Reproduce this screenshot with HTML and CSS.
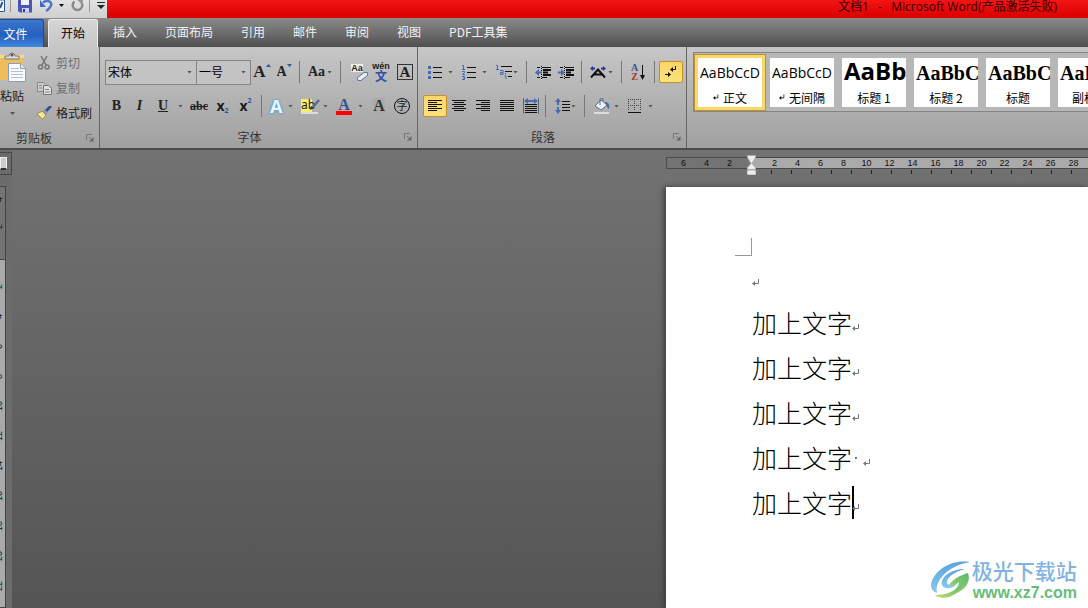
FILE: index.html
```html
<!DOCTYPE html>
<html lang="zh-CN">
<head>
<meta charset="utf-8">
<title>文档1 - Microsoft Word</title>
<link rel="stylesheet" href="styles.css">
</head>
<body>
<svg class="defs" aria-hidden="true">
  <symbol id="ret" viewBox="0 0 8 8"><path d="M6.500 0v4.500H2" fill="none" stroke="currentColor"/><path d="M0 4.500 3 2v5z" fill="currentColor"/></symbol>
  <symbol id="launch" viewBox="0 0 8 8"><path d="M.5 6V.5H6M3 3l3 3" fill="none" stroke="#777"/><path d="M7.500 3v4.500H3z" fill="#666"/></symbol>
</svg>
<header class="titlebar">
  <div class="quick">
    <button aria-label="Word"><svg width="5" height="12" viewBox="0 0 5 12"><path d="M0 0h4.500v11.500H0" fill="#fff" stroke="#2455a4"/><path d="M0 8 2.500 2" stroke="#2455a4" stroke-width="2"/></svg></button>
    <i class="q-sep"></i>
    <button aria-label="保存"><svg width="14" height="13" viewBox="0 0 14 13"><path d="M0 0h14v12.500H2L0 11z" fill="#4a55b8"/><path d="M3 0h8v5H3z" fill="#eef2fc"/><path d="M4 8h7v4.500H4z" fill="#cdd3ee"/><path d="M5 9h2v3H5z" fill="#333c8c"/></svg></button>
    <button aria-label="撤消"><svg width="13" height="12" viewBox="0 0 13 12"><path d="M3 2.500C8-1 13 2 10.500 6.500 9.500 8.500 8 10 6 11" fill="none" stroke="#4a78cc" stroke-width="2.500"/><path d="M0 0v7h6z" fill="#3c6bc4"/></svg></button>
    <i class="caret dark"></i>
    <button aria-label="重复"><svg width="13" height="12" viewBox="0 0 13 12"><path d="M3.500 1.500a4.800 4.800 0 1 0 6 0" fill="none" stroke="#8b8b8b" stroke-width="2.500"/><path d="M6 0h6v5z" fill="#999"/></svg></button>
    <i class="q-sep"></i>
    <button aria-label="自定义快速访问工具栏"><svg width="8" height="8" viewBox="0 0 8 8"><path d="M0 .5h8" stroke="#222"/><path d="M0 3h8L4 7z" fill="#222"/></svg></button>
  </div>
  <div class="title">文档1&nbsp; &nbsp;-&nbsp; &nbsp;Microsoft Word(产品激活失败)</div>
</header>
<nav class="tabs">
  <button class="file">文件</button>
  <button class="tab active">开始</button>
  <button class="tab">插入</button>
  <button class="tab">页面布局</button>
  <button class="tab">引用</button>
  <button class="tab">邮件</button>
  <button class="tab">审阅</button>
  <button class="tab">视图</button>
  <button class="tab">PDF工具集</button>
</nav>
<section class="ribbon">
  <div class="group clip">
    <div class="clip-body">
      <button class="paste">
        <svg width="27" height="32" viewBox="0 0 27 32"><path d="M0 3h24v25H0z" fill="#eebd5b"/><path d="M0 3h24v3H0z" fill="#f6d791"/><path d="M5 6V4h4a3 3 0 0 1 6 0h4v3H5z" fill="#ddd" stroke="#777"/><circle cx="12" cy="3" r="1.500" fill="#555"/><path d="M8.500 11.500h12l5 5v13h-17z" fill="#f8fafe" stroke="#8b9cb8"/><path d="M20.500 11.500v5h5" fill="#dfe7f5" stroke="#8b9cb8"/><path d="M11 16.500h8M11 19.500h12M11 22.500h12M11 25.500h12" stroke="#b4c0d6"/></svg>
        <span>粘贴</span><i class="caret"></i>
      </button>
      <div class="clip-list">
        <button class="off"><svg width="15" height="14" viewBox="0 0 15 14"><path d="M4 0l5 9M10 0 5 9" stroke="#777" stroke-width="1.500"/><circle cx="3.500" cy="11" r="2" fill="none" stroke="#777" stroke-width="1.500"/><circle cx="10" cy="11" r="2" fill="none" stroke="#777" stroke-width="1.500"/></svg>剪切</button>
        <button class="off"><svg width="15" height="14" viewBox="0 0 15 14"><path d="M.5 1.500h6l2 2v7h-8z" fill="#ccc" stroke="#888"/><path d="M6.500 4.500h5l3 3v6h-8z" fill="#ddd" stroke="#777"/><path d="M2 4.500h3M2 7h3M8 8.500h4M8 11h5" stroke="#888"/></svg>复制</button>
        <button><svg width="15" height="14" viewBox="0 0 15 14"><path d="M14 0 9 5" stroke="#3c4d91" stroke-width="3"/><path d="m7 3 4 4-2 2-4-4z" fill="#8b97bd"/><path d="M5 5l4 4-3 4.500L0 8z" fill="#f2e08b" stroke="#a88d32"/><path d="m2 7 4 4" stroke="#fff"/></svg>格式刷</button>
      </div>
    </div>
    <div class="label"><span>剪贴板</span><button aria-label="剪贴板选项"><svg width="8" height="8"><use href="#launch"/></svg></button></div>
  </div>

  <div class="group font">
    <div class="row">
      <div class="combo name"><select aria-label="字体"><option>宋体</option></select></div>
      <div class="combo size"><select aria-label="字号"><option>一号</option></select></div>
      <button class="w22 serif big" aria-label="增大字体">A<svg class="tip" width="5" height="3"><path d="M0 3h5L2.500 0z" fill="#2f55a5"/></svg></button>
      <button class="w22 serif mid" aria-label="缩小字体">A<svg class="tip" width="5" height="3"><path d="M0 0h5L2.500 3z" fill="#2f55a5"/></svg></button>
      <i class="sep"></i>
      <button class="w32 serif case" aria-label="更改大小写">Aa<i class="caret"></i></button>
      <i class="sep"></i>
      <button class="w24 clear" aria-label="清除格式"><span>Aa</span><svg width="12" height="9" viewBox="0 0 12 9"><path d="M1 6 8 .500h3.500v3L5 8.500H2z" fill="#e8eef8" stroke="#60749c"/></svg></button>
      <button class="w24 wen" aria-label="拼音指南"><span>wén</span><b>文</b></button>
      <button class="w24" aria-label="字符边框"><span class="boxed">A</span></button>
    </div>
    <div class="row">
      <button class="w23 serif mid" aria-label="加粗">B</button>
      <button class="w23 serif mid ital" aria-label="倾斜">I</button>
      <button class="split w36 under serif mid" aria-label="下划线"><u>U</u><i class="caret"></i></button>
      <button class="w24 serif strike" aria-label="删除线">abc</button>
      <button class="w23 script" aria-label="下标">x<sub>2</sub></button>
      <button class="w23 script" aria-label="上标">x<sup>2</sup></button>
      <i class="sep"></i>
      <button class="split w31" aria-label="文本效果"><span class="glow">A</span><i class="caret"></i></button>
      <button class="split w35" aria-label="突出显示"><span class="hi">ab<svg width="12" height="12" viewBox="0 0 12 12"><path d="M11 1 5 8" stroke="#5c6d94" stroke-width="2.500"/><path d="m3 7 3 2-4 2z" fill="#333"/></svg></span><i class="caret"></i></button>
      <button class="split w35" aria-label="字体颜色"><span class="fc">A</span><i class="caret"></i></button>
      <button class="w24" aria-label="字符底纹"><span class="shade">A</span></button>
      <button class="w22" aria-label="带圈字符"><span class="ring">字</span></button>
    </div>
    <div class="label"><span>字体</span><button aria-label="字体选项"><svg width="8" height="8"><use href="#launch"/></svg></button></div>
  </div>

  <div class="group para">
    <div class="row">
      <button class="split w34" aria-label="项目符号"><svg width="14" height="14" viewBox="0 0 14 14"><path d="M5 2.500h9M5 7.500h9M5 12.500h9" stroke="#111"/><path d="M0 1h3v3H0zM0 6h3v3H0zM0 11h3v3H0z" fill="#4669b0"/></svg><i class="caret"></i></button>
      <button class="split w34" aria-label="编号"><svg width="14" height="15" viewBox="0 0 14 15"><path d="M5 2.500h9M5 7.500h9M5 12.500h9" stroke="#111"/><path d="M0 .5h1.500v4M0 4.500h3M0 6.500h2.500v1L.5 9.500H3M0 11.500h2.500v3H0M1 13h2" fill="none" stroke="#4669b0"/></svg><i class="caret"></i></button>
      <button class="split w31" aria-label="多级列表"><svg width="17" height="16" viewBox="0 0 17 16"><path d="M6 2.500h11M10 7.500h7M13 12.500h4" stroke="#111"/><path d="M1 1.500h1.500v4M1 5.500h3M5 6.500h3v4H5.500v-2H8M10.500 9v1.500M9.500 12h1.500v3" fill="none" stroke="#4669b0"/></svg><i class="caret"></i></button>
      <i class="sep"></i>
      <button class="w23" aria-label="减少缩进"><svg width="16" height="13" viewBox="0 0 16 13"><path d="M2 1.500h3M7 1.500h9M2 11.500h3M7 11.500h5" stroke="#111"/><path d="M8 4h8M8 6.500h5M8 9h8" stroke="#111" stroke-width="2"/><path d="M6.500 0v13" stroke="#111" stroke-dasharray="1 1"/><path d="M0 6.500 4 3v2.500h3v2H4V10z" fill="#4669b0"/></svg></button>
      <button class="w23" aria-label="增加缩进"><svg width="16" height="13" viewBox="0 0 16 13"><path d="M2 1.500h3M7 1.500h9M2 11.500h3M7 11.500h5" stroke="#111"/><path d="M8 4h8M8 6.500h5M8 9h8" stroke="#111" stroke-width="2"/><path d="M6.500 0v13" stroke="#111" stroke-dasharray="1 1"/><path d="M7 6.500 3 3v2.500H0v2h3V10z" fill="#4669b0"/></svg></button>
      <i class="sep"></i>
      <button class="split w31" aria-label="中文版式"><svg width="17" height="14" viewBox="0 0 17 14"><path d="m1 12.500 7-8 7 8M4 9.500h8" fill="none" stroke="#111" stroke-width="2"/><path d="M0 3.500 3 1v1.500h2v2H3V6zM16 3.500 13 1v1.500h-2v2h2V6z" fill="#27389c"/></svg><i class="caret"></i></button>
      <i class="sep"></i>
      <button class="w24 sort" aria-label="排序"><span><b>A</b><b>Z</b></span><svg width="5" height="15" viewBox="0 0 5 15"><path d="M2.500 0v12" stroke="#111"/><path d="M0 10h5l-2.500 5z" fill="#111"/></svg></button>
      <i class="sep"></i>
      <button class="w24 on" aria-label="显示编辑标记"><svg width="12" height="12" viewBox="0 0 12 12"><path d="M10.500 0v3.500H7M0 8.500h4" fill="none" stroke="#111"/><path d="M5 3.500 8 1v5zM6 8.500 3 6v5z" fill="#111"/></svg></button>
    </div>
    <div class="row">
      <button class="w24 on" aria-label="左对齐"><svg width="14" height="12" viewBox="0 0 14 12"><path d="M0 .5h14M0 2.500h9M0 4.500h14M0 6.500h9M0 8.500h14M0 10.500h9" stroke="#111"/></svg></button>
      <button class="w24" aria-label="居中"><svg width="14" height="12" viewBox="0 0 14 12"><path d="M0 .5h14M2 2.500h10M0 4.500h14M2 6.500h10M0 8.500h14M2 10.500h10" stroke="#111"/></svg></button>
      <button class="w24" aria-label="右对齐"><svg width="14" height="12" viewBox="0 0 14 12"><path d="M0 .5h14M5 2.500h9M0 4.500h14M5 6.500h9M0 8.500h14M5 10.500h9" stroke="#111"/></svg></button>
      <button class="w24" aria-label="两端对齐"><svg width="14" height="12" viewBox="0 0 14 12"><path d="M0 .5h14M0 2.500h14M0 4.500h14M0 6.500h14M0 8.500h14M0 10.500h14" stroke="#111"/></svg></button>
      <button class="w24" aria-label="分散对齐"><svg width="16" height="16" viewBox="0 0 16 16"><path d="M.5 0v16M15.500 0v16" stroke="#567"/><path d="M2 6.500h12M2 8.500h12M2 10.500h12M2 12.500h12M2 14.500h12" stroke="#111"/><path d="M1 3 5 0v2h6V0l4 3-4 3V4H5v2z" fill="#4669b0"/></svg></button>
      <i class="sep tight"></i>
      <button class="split w30" aria-label="行距"><svg width="15" height="16" viewBox="0 0 15 16"><path d="M7 3.500h8M7 6.500h8M7 9.500h8M7 12.500h8" stroke="#111"/><path d="m3 0 3 4H4v3H2V4H0zM3 16l3-4H4V9H2v3H0z" fill="#4669b0"/></svg><i class="caret"></i></button>
      <i class="sep"></i>
      <button class="split w34" aria-label="底纹"><svg width="16" height="16" viewBox="0 0 16 16"><path d="M11 4c4 0 5 3 4 7-2-1-1-3-4-4z" fill="#4669b0"/><path d="m7 2 6 5-6 5-6-4z" fill="#edf3fb" stroke="#596b8d"/><path d="M6 7V1c0-1 3-1 3 0v2" fill="none" stroke="#596b8d"/><path d="M0 14h15v2H0z" fill="#ddd"/></svg><i class="caret"></i></button>
      <button class="split w34" aria-label="边框"><svg width="14" height="14" viewBox="0 0 14 14"><path d="M0 .5h13M.5 0v12M12.500 0v12M0 6.500h13M6.500 0v12" fill="none" stroke="#444" stroke-dasharray="1 1"/><path d="M0 13.500h13" stroke="#111"/></svg><i class="caret"></i></button>
    </div>
    <div class="label"><span>段落</span><button aria-label="段落选项"><svg width="8" height="8"><use href="#launch"/></svg></button></div>
  </div>

  <div class="styles">
    <div class="gallery">
      <button class="card picked"><span class="demo">AaBbCcD</span><span class="cap"><svg width="6" height="7"><use href="#ret"/></svg>正文</span></button>
      <button class="card"><span class="demo">AaBbCcD</span><span class="cap"><svg width="6" height="7"><use href="#ret"/></svg>无间隔</span></button>
      <button class="card"><span class="demo h1">AaBb</span><span class="cap">标题 1</span></button>
      <button class="card"><span class="demo h2">AaBbC</span><span class="cap">标题 2</span></button>
      <button class="card"><span class="demo h2">AaBbC</span><span class="cap">标题</span></button>
      <button class="card"><span class="demo h2">AaBbC</span><span class="cap">副标题</span></button>
    </div>
  </div>
</section>

<main class="work">
  <aside class="side">
    <button class="tabstop" aria-label="制表符"><i></i></button>
    <div class="vruler">
      <div class="vmargin"><span>4</span><span>2</span></div>
      <div class="vbody"><span>2</span><span>4</span><span>6</span><span>8</span><span>10</span><span>12</span><span>14</span><span>16</span><span>18</span><span>20</span><span>22</span></div>
    </div>
  </aside>
  <div class="paper">
    <div class="ruler">
      <div class="rmargin"><span>6</span><span>4</span><span>2</span></div>
      <div class="rbody"><span>2</span><span>4</span><span>6</span><span>8</span><span>10</span><span>12</span><span>14</span><span>16</span><span>18</span><span>20</span><span>22</span><span>24</span><span>26</span><span>28</span></div>
      <svg class="indent" width="9" height="20" viewBox="0 0 9 20"><path d="M.5.5h8v2L5 8.500H4L.5 2.500zM.5 14.500v-2L4 8.500h1l3.500 4v2z" fill="#eee" stroke="#aaa"/><path d="M.5 15.500h8v4h-8z" fill="#eee" stroke="#ccc"/></svg>
    </div>
    <div class="ticks"></div>
    <article class="page">
      <div class="corner"></div>
      <div class="text">
        <p class="blank"><svg width="8" height="8"><use href="#ret"/></svg></p>
        <p>加上文字<svg width="8" height="8"><use href="#ret"/></svg></p>
        <p>加上文字<svg width="8" height="8"><use href="#ret"/></svg></p>
        <p>加上文字<svg width="8" height="8"><use href="#ret"/></svg></p>
        <p>加上文字<i class="space"></i><svg width="8" height="8"><use href="#ret"/></svg></p>
        <p>加上文字<i class="cursor"></i><svg width="8" height="8"><use href="#ret"/></svg></p>
      </div>
    </article>
  </div>
  <div class="mark">
    <svg width="42" height="42" viewBox="0 0 42 42"><defs><linearGradient id="g" x2="0" y2="1"><stop stop-color="#58a4dc"/><stop offset="1" stop-color="#8dc9ed"/></linearGradient><linearGradient id="k" x1="1" x2="0" y2="1"><stop stop-color="#55b96c"/><stop offset="1" stop-color="#c4dd72"/></linearGradient></defs><path d="M40 2C22-1 3 10 1 25c0 4 2 7 6 8C4 20 20 5 40 2z" fill="url(#g)"/><path d="M35 9C21 9 10 17 12 25c2 5 12 4 15-2-5 3-10 3-10-1 0-5 9-11 18-13z" fill="url(#g)"/><path d="M38 13c5 14-12 25-33 24 14-2 24-8 24-15-3 3-7 4-10 3 4-6 12-10 19-12z" fill="url(#k)"/><path d="M5 35c10 0 20-3 27-11-4 11-16 18-27 11z" fill="url(#k)"/></svg>
    <div><div class="m1">极光下载站</div><div class="m2">www.xz7.com</div></div>
  </div>
</main>
</body>
</html>
```
FILE: styles.css
```css
* { box-sizing: border-box; }
body {
  margin: 0;
  height: 100vh;
  display: flex;
  flex-direction: column;
  overflow: hidden;
  font: 12px/16px "Noto Sans CJK SC", sans-serif;
  color: #1c1c1c;
  background: #666;
}
button {
  border: 0;
  padding: 0;
  margin: 0;
  background: none;
  font: inherit;
  color: inherit;
  display: flex;
  align-items: center;
  justify-content: center;
  white-space: nowrap;
}
svg { display: block; flex: none; }
.defs { position: absolute; width: 0; height: 0; }
.caret {
  width: 5px;
  height: 3px;
  flex: none;
  background: #555;
  clip-path: polygon(0 0, 100% 0, 50% 100%);
}
.caret.dark { background: #111; }

/* title bar */
.titlebar { display: flex; height: 18px; background: linear-gradient(#f41414, #d90000); }
.quick {
  width: 107px;
  display: flex;
  align-items: flex-start;
  gap: 8px;
  background: linear-gradient(#e3e3e3, #cfcfcf);
}
.quick .caret { margin: 4px -1px 0 -2px; }
.quick button { height: 12px; }
.q-sep { width: 1px; height: 12px; background: #999; margin: 0 -1px 0 -3px; }
.title {
  flex: 1;
  padding-right: 31px;
  text-align: right;
  font: 12px/14px "Open Sans", "Noto Sans CJK SC", sans-serif;
  color: #300;
  white-space: nowrap;
}

/* tabs */
.tabs {
  display: flex;
  height: 29px;
  padding-top: 1px;
  background: linear-gradient(#8b8b8b, #505050);
  color: #f2f2f2;
}
.file {
  width: 44px;
  padding-right: 12px;
  margin-right: 4px;
  border: 1px solid #1c4b9b;
  border-left: 0;
  border-bottom: 0;
  border-radius: 0 3px 0 0;
  background: linear-gradient(#3b78cf, #2560bd 55%, #3f86e0);
  color: #fff;
}
.tab { padding: 0 14px 2px; }
.tab.active {
  width: 50px;
  padding: 0 0 2px;
  margin-right: 1px;
  border: 1px solid #eee;
  border-bottom: 0;
  border-radius: 3px 3px 0 0;
  background: linear-gradient(#d6d6d6, #c5c5c5);
  color: #000;
}

/* ribbon */
.ribbon {
  display: flex;
  height: 103px;
  background: linear-gradient(#c6c6c6, #b5b5b5 45%, #a0a0a0);
  border-bottom: 2px solid #4c4c4c;
}
.group {
  flex: none;
  display: flex;
  flex-direction: column;
  gap: 8px;
  padding: 12px 0 0 5px;
  border-right: 1px solid #666;
}
.clip { width: 100px; padding: 5px 0 0; gap: 4px; }
.font { width: 318px; }
.para { width: 269px; }
.row { display: flex; align-items: center; height: 26px; }
.row button { height: 24px; flex: none; }
.w22 { width: 22px; }
.w23 { width: 23px; }
.w24 { width: 24px; }
.w30 { width: 30px; }
.w31 { width: 31px; }
.w32 { width: 32px; }
.w34 { width: 34px; }
.w35 { width: 35px; }
.w36 { width: 36px; }
.split { justify-content: space-between; padding: 0 4px 0 5px; }
.split.under { padding-left: 7px; }
.sep { width: 1px; height: 22px; margin: 0 4px; background: #777; flex: none; }
.sep.tight { margin: 0 4px 0 2px; }
.label { display: flex; align-items: center; height: 20px; color: #333; }
.label span { flex: 1; text-align: center; }
.label button { margin-right: 5px; }
.clip .label span { padding-right: 18px; }
.font .label span, .para .label span { padding-right: 10px; }
.clip-body { display: flex; height: 72px; gap: 10px; }
.paste { width: 27px; flex-direction: column; align-items: flex-start; justify-content: flex-start; }
.paste span { line-height: 24px; }
.paste .caret { margin: 4px 0 0 10px; }
.clip-list { display: flex; flex-direction: column; gap: 9px; padding-top: 3px; }
.clip-list button { gap: 4px; justify-content: flex-start; }
.off { color: #6e6e6e; }

.combo { display: grid; align-items: center; height: 25px; border: 1px solid #858585; background: #c3c3c3; }
.combo.name { width: 92px; }
.combo.size { width: 54px; border-left: 0; }
.combo::after {
  content: "";
  grid-area: 1 / 1;
  justify-self: end;
  width: 5px;
  height: 3px;
  margin-right: 4px;
  background: #555;
  clip-path: polygon(0 0, 100% 0, 50% 100%);
}
.combo select {
  grid-area: 1 / 1;
  width: 100%;
  height: 22px;
  appearance: none;
  border: 0;
  padding: 0 0 0 2px;
  background: none;
  font: inherit;
  color: #000;
}
.serif { font-family: "Liberation Serif", serif; font-weight: 700; color: #222; }
.big { font-size: 17px; }
.mid { font-size: 14px; }
.tip { align-self: flex-start; margin-top: 4px; }
.case { font-size: 14px; gap: 2px; }
.ital { font-style: italic; }
.strike { font-size: 12px; text-decoration: line-through; }
.script { font: 700 14px/14px "Noto Sans", sans-serif; }
.script sub, .script sup { font-size: 7px; line-height: 8px; color: #2f55a5; }
.script sub { align-self: flex-end; margin-bottom: 3px; }
.script sup { align-self: flex-start; margin-top: 3px; }
.clear, .wen { flex-direction: column; }
.clear span { font: 700 9px/8px "Liberation Sans", sans-serif; background: #eee; }
.clear svg { align-self: flex-end; margin-right: 1px; }
.wen span { font: 700 9px/7px "Liberation Sans", sans-serif; }
.wen b { font-size: 12px; line-height: 12px; color: #2f4fa8; }
.boxed { width: 16px; height: 16px; border: 1px solid #333; font: 700 15px/14px "Liberation Serif", serif; }
.glow { font: 700 18px/20px "Noto Sans", sans-serif; color: #eaf6ff; text-shadow: 0 0 2px #2b8bd0, 0 0 3px #5fb0e6; }
.split.w31, .split.w35 { padding-left: 4px; }
.hi { display: flex; width: 17px; height: 15px; font: 12px/11px "Noto Sans", sans-serif; border-bottom: 2px solid #ddd; background: linear-gradient(90deg, #f7ee6a 11px, transparent 11px); }
.hi svg { margin-left: -7px; }
.fc { width: 16px; font: 700 16px/13px "Liberation Serif", serif; color: #35518f; border-bottom: 4px solid #f00; }
.shade { font: 700 16px/16px "Liberation Serif", serif; color: #333; background: #aaa; }
.ring { width: 16px; height: 16px; border: 1px solid #111; border-radius: 50%; font-size: 11px; line-height: 13px; }
.row .on { height: 22px; border: 1px solid #c68f2d; border-radius: 2px; background: linear-gradient(#fbd667, #fee27a); }
.sort { gap: 2px; }
.sort span { display: flex; flex-direction: column; }
.sort b { font: 700 10px/9px "Liberation Serif", serif; color: #35518f; }
.sort b + b { color: #a33; }

/* style gallery */
.styles { flex: 1; min-width: 0; padding: 5px 0 0 6px; }
.gallery {
  display: flex;
  align-items: center;
  gap: 8px;
  height: 60px;
  padding-left: 4px;
  overflow: hidden;
  border: 1px solid #858585;
  border-right: 0;
  background: #b7b7b7;
}
.card { width: 64px; height: 49px; flex: none; flex-direction: column; overflow: hidden; background: #fff; color: #000; }
.picked { box-shadow: 0 0 0 3px #fbd766, 0 0 0 4px #b9923a; }
.demo { width: 100%; height: 31px; padding-left: 2px; overflow: hidden; text-align: left; font: 14px/30px "Open Sans", sans-serif; }
.demo.h1 { font: 700 24px/26px "Open Sans", sans-serif; }
.demo.h2 { font: 700 20px/30px "Liberation Serif", serif; }
.cap { display: flex; align-items: center; gap: 4px; height: 18px; line-height: 14px; }

/* work area */
.work {
  position: relative;
  flex: 1;
  min-height: 0;
  display: grid;
  grid-template-columns: 12px 1fr;
  background: linear-gradient(#727272, #555);
}
.side { display: flex; flex-direction: column; background: #6c6c6c; overflow: hidden; padding-top: 2px; }
.tabstop { flex: none; height: 23px; border: 1px solid #484848; border-left: 0; justify-content: flex-start; }
.tabstop i { width: 7px; height: 13px; background: #ccc; border: 1px solid #eee; border-bottom: 2px solid #333; }
.vruler { flex: 1; width: 6px; margin-top: 11px; border: 1px solid #444; border-left: 0; overflow: hidden; }
.vruler span { display: flex; align-items: center; justify-content: center; width: 12px; height: 30px; margin-left: -7px; writing-mode: vertical-rl; transform: rotate(180deg); font: 9px/12px "Liberation Sans", sans-serif; color: #111; }
.vmargin { height: 72px; background: #747474; overflow: hidden; }
.vmargin span:first-child { height: 24px; }
.vbody { height: 100%; padding-top: 11px; background: #aaa; border-top: 1px solid #444; }
.paper { justify-self: end; width: 39%; min-width: 422px; max-width: 422px; display: flex; flex-direction: column; padding-top: 7px; }
.ruler { position: relative; display: flex; flex: none; height: 12px; border: 1px solid #4b4b4b; border-right: 0; background: #aaa; font: 9px/10px "Liberation Sans", sans-serif; color: #111; }
.ruler span { width: 23px; flex: none; text-align: center; }
.rmargin { display: flex; width: 85px; padding-left: 5px; background: #737373; flex: none; }
.rbody { display: flex; flex: 1; min-width: 0; overflow: hidden; padding-left: 11px; }
.indent { position: absolute; left: 80px; top: -3px; }
.ticks { flex: none; height: 4px; margin: 1px 0 13px 105px; background: repeating-linear-gradient(90deg, #222 0 1px, transparent 1px 20px); }
.page { flex: 1; background: #fff; box-shadow: -2px 0 5px #3c3c3c; padding: 51px 0 0 69px; }
.corner { width: 17px; height: 18px; border: solid #999; border-width: 0 1px 1px 0; }
.text { padding-left: 17px; font: 25px/45px "Noto Sans CJK SC", sans-serif; font-weight: 300; color: #000; }
.text p { display: flex; align-items: center; margin: 0; height: 45px; }
.text p svg { color: #777; margin-top: 10px; }
.text .blank { height: 44px; }
.space { width: 2px; height: 2px; margin: 0 6px 0 3px; background: #777; }
.cursor { width: 2px; height: 33px; margin-right: -2px; background: #000; }
.mark { position: absolute; right: 11px; bottom: 5px; display: flex; align-items: center; font-family: "Noto Sans CJK SC", sans-serif; }
.m1 { font-size: 21px; line-height: 23px; font-weight: 500; color: #7fb3e2; }
.m2 { padding-left: 1px; font: 700 16px/21px "Liberation Sans", sans-serif; color: #67bd78; }
```
